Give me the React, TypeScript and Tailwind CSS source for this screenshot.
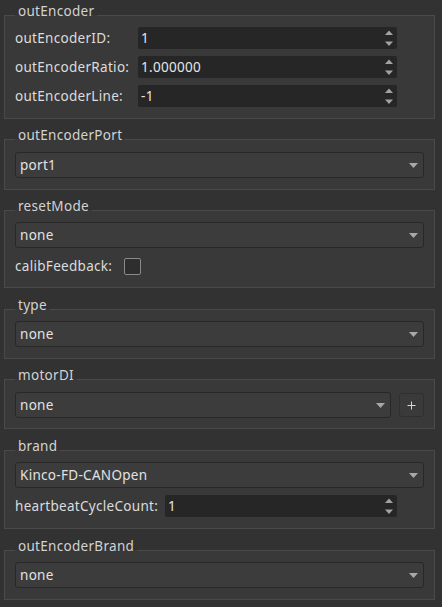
import type { ReactNode } from "react";

const font = { fontFamily: '"Noto Sans", "Noto Sans CJK SC", sans-serif' };

// shared text style, roughly the width of the original UI font
const txt = "text-[13.5px] tracking-[0.3px]";

function Group({
  title,
  children,
  className = "",
}: {
  title: string;
  children: ReactNode;
  className?: string;
}) {
  return (
    <fieldset
      className={`ml-[4px] w-[431px] border border-[#4a4a4a] bg-[#393939] px-[10px] ${className}`}
    >
      <legend className={`px-[3px] pb-[8px] leading-[16px] text-[#d2d2d2] ${txt}`}>
        {title}
      </legend>
      {children}
    </fieldset>
  );
}

function SpinArrows() {
  return (
    <svg width="10" height="20" viewBox="0 0 10 20" className="mr-[2px] shrink-0">
      <path d="M1 7 L5 2.5 L9 7 Z" fill="#a3a3a3" />
      <path d="M1 13.5 L9 13.5 L5 18 Z" fill="#a3a3a3" />
    </svg>
  );
}

function SpinBox({ value }: { value: string }) {
  return (
    <div className="flex h-[22px] flex-1 items-center rounded-[2px] bg-[#262626] pl-[3px] pr-[1px]">
      <span className={`flex-1 text-[#e6e6e6] ${txt}`}>{value}</span>
      <SpinArrows />
    </div>
  );
}

function ComboBox({ value, className = "" }: { value: string; className?: string }) {
  return (
    <div
      className={`flex h-[26px] items-center rounded-[3px] border border-[#282828] bg-[#3c3c3c] pl-[4px] pr-[5px] ${className}`}
    >
      <span className={`flex-1 text-[#e2e2e2] ${txt}`}>{value}</span>
      <svg width="9" height="5" viewBox="0 0 9 5">
        <path d="M0 0 L9 0 L4.5 5 Z" fill="#a8a8a8" />
      </svg>
    </div>
  );
}

function FormRow({ label, value, labelWidth }: { label: string; value: string; labelWidth: string }) {
  return (
    <div className="flex h-[22px] items-center pr-[27px]">
      <span className={`${labelWidth} shrink-0 text-[#dcdcdc] ${txt}`}>{label}</span>
      <SpinBox value={value} />
    </div>
  );
}

export default function App() {
  return (
    <div className="h-[607px] w-[442px] overflow-hidden bg-[#323232] pt-[3px]" style={font}>
      <Group title="outEncoder" className="pb-[11px]">
        <div className="flex flex-col gap-[7px]">
          <FormRow label="outEncoderID:" value="1" labelWidth="w-[123px]" />
          <FormRow label="outEncoderRatio:" value="1.000000" labelWidth="w-[123px]" />
          <FormRow label="outEncoderLine:" value="-1" labelWidth="w-[123px]" />
        </div>
      </Group>

      <Group title="outEncoderPort" className="mt-[8px] pt-[1px] pb-[11px]">
        <ComboBox value="port1" />
      </Group>

      <Group title="resetMode" className="mt-[8px] pb-[10px]">
        <ComboBox value="none" />
        <div className="mt-[7px] flex h-[22px] items-center">
          <span className={`w-[109px] shrink-0 text-[#dcdcdc] ${txt}`}>calibFeedback:</span>
          <span className="h-[17px] w-[17px] rounded-[2px] border border-[#8a8a8a] bg-[#2e2e2e]" />
        </div>
      </Group>

      <Group title="type" className="mt-[9px] pb-[11px]">
        <ComboBox value="none" />
      </Group>

      <Group title="motorDI" className="mt-[8px] pt-[1px] pb-[10px]">
        <div className="flex items-center gap-[8px]">
          <ComboBox value="none" className="flex-1" />
          <button
            type="button"
            className="flex h-[24px] w-[25px] items-center justify-center rounded-[3px] border border-[#2f2f2f] bg-[#3a3a3a]"
          >
            <svg width="9" height="9" viewBox="0 0 9 9">
              <path d="M4.5 0.5 V8.5 M0.5 4.5 H8.5" stroke="#d8d8d8" strokeWidth="1" />
            </svg>
          </button>
        </div>
      </Group>

      <Group title="brand" className="mt-[9px] pb-[11px]">
        <ComboBox value="Kinco-FD-CANOpen" />
        <div className="mt-[7px]">
          <FormRow label="heartbeatCycleCount:" value="1" labelWidth="w-[150px]" />
        </div>
      </Group>

      <Group title="outEncoderBrand" className="mt-[9px] pb-[11px]">
        <ComboBox value="none" />
      </Group>
    </div>
  );
}
